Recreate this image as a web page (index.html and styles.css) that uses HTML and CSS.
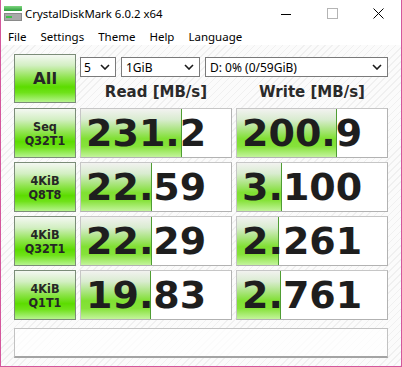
FILE: index.html
```html
<!DOCTYPE html>
<html>
<head>
<meta charset="utf-8">
<link rel="stylesheet" href="styles.css">
</head>
<body>
<div class="window">
  <div class="titlebar">
    <svg class="app-icon" width="18" height="16" viewBox="0 0 18 16">
      <defs>
        <linearGradient id="gtop" x1="0" y1="0" x2="0" y2="1">
          <stop offset="0" stop-color="#7fd67f"/>
          <stop offset="1" stop-color="#2c9c3c"/>
        </linearGradient>
      </defs>
      <rect x="0" y="0" width="18" height="5" fill="url(#gtop)"/>
      <rect x="0" y="7" width="18" height="8" fill="#8a8a8a"/>
      <rect x="1" y="8" width="16" height="6" fill="#a9a9a9"/>
      <rect x="2" y="10" width="6" height="2" fill="#3fc04a"/>
    </svg>
    <span class="title">CrystalDiskMark 6.0.2 x64</span>
    <div class="controls">
      <span class="ctl"><svg width="10" height="10" viewBox="0 0 10 10"><path d="M0 5.5H10" stroke="#000" stroke-width="1"/></svg></span>
      <span class="ctl"><svg width="11" height="11" viewBox="0 0 11 11"><rect x="0.5" y="0.5" width="10" height="10" fill="none" stroke="#b4b4b4" stroke-width="1"/></svg></span>
      <span class="ctl"><svg width="11" height="11" viewBox="0 0 11 11"><path d="M0.5 0.5L10.5 10.5M10.5 0.5L0.5 10.5" stroke="#000" stroke-width="1"/></svg></span>
    </div>
  </div>
  <div class="menubar">
    <span class="menu-item">File</span>
    <span class="menu-item">Settings</span>
    <span class="menu-item">Theme</span>
    <span class="menu-item">Help</span>
    <span class="menu-item">Language</span>
  </div>
  <div class="content">
    <div class="grid">
      <div class="btn btn-all">All</div>
      <div class="top-right">
        <div class="combos">
          <div class="combo combo-count"><span>5</span><svg class="chev" width="10" height="6" viewBox="0 0 10 6"><path d="M1 1L5 5L9 1" fill="none" stroke="#1a1a1a" stroke-width="1.6"/></svg></div>
          <div class="combo combo-size"><span>1GiB</span><svg class="chev" width="10" height="6" viewBox="0 0 10 6"><path d="M1 1L5 5L9 1" fill="none" stroke="#1a1a1a" stroke-width="1.6"/></svg></div>
          <div class="combo combo-drive"><span>D: 0% (0/59GiB)</span><svg class="chev" width="10" height="6" viewBox="0 0 10 6"><path d="M1 1L5 5L9 1" fill="none" stroke="#1a1a1a" stroke-width="1.6"/></svg></div>
        </div>
        <div class="headers">
          <div class="header">Read [MB/s]</div>
          <div class="header">Write [MB/s]</div>
        </div>
      </div>

      <div class="btn btn-row">Seq<br>Q32T1</div>
      <div class="val" style="--fill:100px">231.2</div>
      <div class="val" style="--fill:99px">200.9</div>

      <div class="btn btn-row">4KiB<br>Q8T8</div>
      <div class="val" style="--fill:70px">22.59</div>
      <div class="val" style="--fill:44px">3.100</div>

      <div class="btn btn-row">4KiB<br>Q32T1</div>
      <div class="val" style="--fill:70px">22.29</div>
      <div class="val" style="--fill:41px">2.261</div>

      <div class="btn btn-row">4KiB<br>Q1T1</div>
      <div class="val" style="--fill:69px">19.83</div>
      <div class="val" style="--fill:43px">2.761</div>
    </div>
    <div class="status"></div>
  </div>
</div>
</body>
</html>
```

FILE: styles.css
```css
* { box-sizing: border-box; }
html, body { margin: 0; padding: 0; background: #ffffff; }

.window {
  width: 402px;
  height: 367px;
  border: 1px solid #d4579c;
  border-top: none;
  display: flex;
  flex-direction: column;
  background: #ffffff;
  overflow: hidden;
}

.titlebar {
  height: 27px;
  display: flex;
  align-items: center;
  background: #ffffff;
  font-family: "Noto Sans", "DejaVu Sans", sans-serif;
  font-size: 11.4px;
  color: #000;
}
.app-icon { margin-left: 3px; margin-top: 1px; flex: none; }
.title { margin-left: 3px; white-space: nowrap; }
.controls { margin-left: auto; display: flex; height: 27px; }
.ctl { width: 46px; height: 27px; display: flex; align-items: center; justify-content: center; }

.menubar {
  height: 18px;
  display: flex;
  align-items: center;
  font-family: "Noto Sans", "DejaVu Sans", sans-serif;
  font-size: 11.5px;
  color: #000;
  background: #ffffff;
}
.menu-item { padding: 0 7px; white-space: nowrap; }

.content {
  flex: 1;
  padding: 9px 12px 0 13px;
  background-color: #fafafa;
  background-image: repeating-linear-gradient(135deg, #fbfbfb 0px, #fbfbfb 4px, #f0f0f0 4px, #f0f0f0 5px);
}

.grid {
  display: grid;
  grid-template-columns: 62px 152px 152px;
  grid-template-rows: repeat(5, 50px);
  column-gap: 4px;
  row-gap: 4px;
}

.btn {
  border: 1px solid #7b8c78;
  background: linear-gradient(to bottom, #f4f8f2 0%, #d3efc3 22%, #8fe44e 48%, #5cdc00 68%, #6fe21a 80%, #b6f48e 100%);
  display: flex;
  align-items: center;
  justify-content: center;
  text-align: center;
  color: #262626;
  font-weight: bold;
}
.btn-all {
  font-family: "DejaVu Sans", sans-serif;
  font-size: 16.5px;
  height: 49px;
}
.btn-row {
  font-family: "DejaVu Sans Condensed", "DejaVu Sans", sans-serif;
  font-size: 12.5px;
  line-height: 14px;
  padding-top: 1px;
}

.top-right {
  grid-column: 2 / span 2;
  display: flex;
  flex-direction: column;
}
.combos {
  display: flex;
  gap: 5px;
  margin-top: 3px;
}
.combo {
  height: 20px;
  border: 1px solid #7a7a7a;
  background: #ffffff;
  display: flex;
  align-items: center;
  padding: 0 5px 0 4px;
  font-family: "Noto Sans", "DejaVu Sans", sans-serif;
  font-size: 12px;
  color: #000;
  white-space: nowrap;
}
.combo span { flex: 1; }
.chev { flex: none; }
.combo-count { width: 36px; padding-left: 3px; }
.combo-size { width: 79px; }
.combo-drive { width: 183px; }

.headers {
  display: grid;
  grid-template-columns: 152px 152px;
  column-gap: 4px;
  margin-top: 6px;
}
.header {
  text-align: center;
  font-family: "DejaVu Sans", sans-serif;
  font-weight: bold;
  font-size: 15px;
  line-height: 18px;
  color: #2a2a2a;
}

.val {
  border: 1px solid #c6c6c6;
  border-right-color: #b2b2b2;
  border-bottom-color: #b2b2b2;
  background:
    linear-gradient(#4f9d33, #4f9d33) no-repeat var(--fill) 0 / 1px 100%,
    linear-gradient(to bottom, #f2f2f0 0%, #d9ecd0 22%, #a6e478 45%, #80e032 62%, #86e23a 78%, #c3f49c 100%) no-repeat 0 0 / var(--fill) 100%,
    #ffffff;
  font-family: "DejaVu Sans", sans-serif;
  font-weight: bold;
  font-size: 38px;
  line-height: 48px;
  color: #1e1e1e;
  padding-left: 5px;
  white-space: nowrap;
  overflow: hidden;
}

.status {
  margin-top: 8px;
  width: 374px;
  height: 30px;
  border: 1px solid #c2c2c2;
  border-bottom: 2px solid #a4a4a4;
  background: rgba(255, 255, 255, 0.75);
}
```
